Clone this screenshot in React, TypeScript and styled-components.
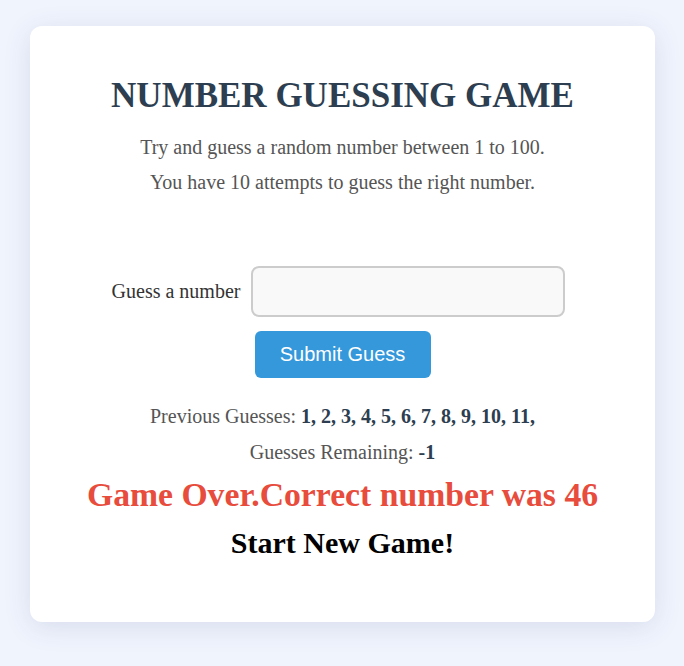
import React from "react";
import styled, { createGlobalStyle } from "styled-components";

const Global = createGlobalStyle`
  html, body { margin: 0; padding: 0; }
  body {
    background: #f0f4fd;
    font-family: "Liberation Serif", "Times New Roman", serif;
  }
`;

const Page = styled.div`
  padding: 26px 29px 44px 30px;
`;

const Card = styled.div`
  background: #ffffff;
  border-radius: 12px;
  box-shadow: 0 5px 28px rgba(40, 60, 120, 0.12);
  padding: 50px 30px 44px;
  text-align: center;
  min-height: 596px;
  box-sizing: border-box;
`;

const Title = styled.h1`
  margin: 0 0 14px;
  font-size: 35px;
  font-weight: bold;
  color: #2c3e50;
`;

const Intro = styled.p`
  margin: 0;
  font-size: 20px;
  line-height: 35px;
  color: #555555;
`;

const Form = styled.form`
  margin-top: 66px;
  display: flex;
  flex-direction: column;
  align-items: center;
`;

const FieldRow = styled.div`
  display: flex;
  align-items: center;
  gap: 11px;
  margin-left: -8px;
`;

const Label = styled.label`
  font-size: 20px;
  color: #333333;
`;

const Input = styled.input`
  width: 314px;
  height: 51px;
  box-sizing: border-box;
  border: 2px solid #cccccc;
  border-radius: 8px;
  background: #f9f9f9;
  font-size: 18px;
  padding: 0 12px;
  outline: none;
`;

const SubmitButton = styled.button`
  margin-top: 14px;
  width: 176px;
  height: 47px;
  border: none;
  border-radius: 6px;
  background: #3498db;
  color: #ffffff;
  font-family: "Liberation Sans", Arial, sans-serif;
  font-size: 20px;
  cursor: pointer;
`;

const Results = styled.div`
  margin-top: 20px;
`;

const Stat = styled.p`
  margin: 0;
  font-size: 20px;
  line-height: 36px;
  color: #555555;
`;

const Value = styled.strong`
  color: #2c3e50;
`;

const LowOrHi = styled.p`
  margin: 1px 0 0;
  font-size: 33.7px;
  font-weight: bold;
  line-height: 48px;
  color: #e74c3c;
`;

const NewGame = styled.p`
  margin: 0;
  font-size: 30px;
  font-weight: bold;
  line-height: 48px;
  color: #000000;
`;

export default function App() {
  const guesses = [1, 2, 3, 4, 5, 6, 7, 8, 9, 10, 11];
  return (
    <>
      <Global />
      <Page>
        <Card>
          <Title>NUMBER GUESSING GAME</Title>
          <Intro>Try and guess a random number between 1 to 100.</Intro>
          <Intro>You have 10 attempts to guess the right number.</Intro>
          <Form onSubmit={(e) => e.preventDefault()}>
            <FieldRow>
              <Label htmlFor="guessField">Guess a number</Label>
              <Input id="guessField" type="number" />
            </FieldRow>
            <SubmitButton type="submit">Submit Guess</SubmitButton>
          </Form>
          <Results>
            <Stat>
              Previous Guesses: <Value>{guesses.map((g) => `${g}, `).join("")}</Value>
            </Stat>
            <Stat>
              Guesses Remaining: <Value>-1</Value>
            </Stat>
            <LowOrHi>Game Over.Correct number was 46</LowOrHi>
            <NewGame>Start New Game!</NewGame>
          </Results>
        </Card>
      </Page>
    </>
  );
}
